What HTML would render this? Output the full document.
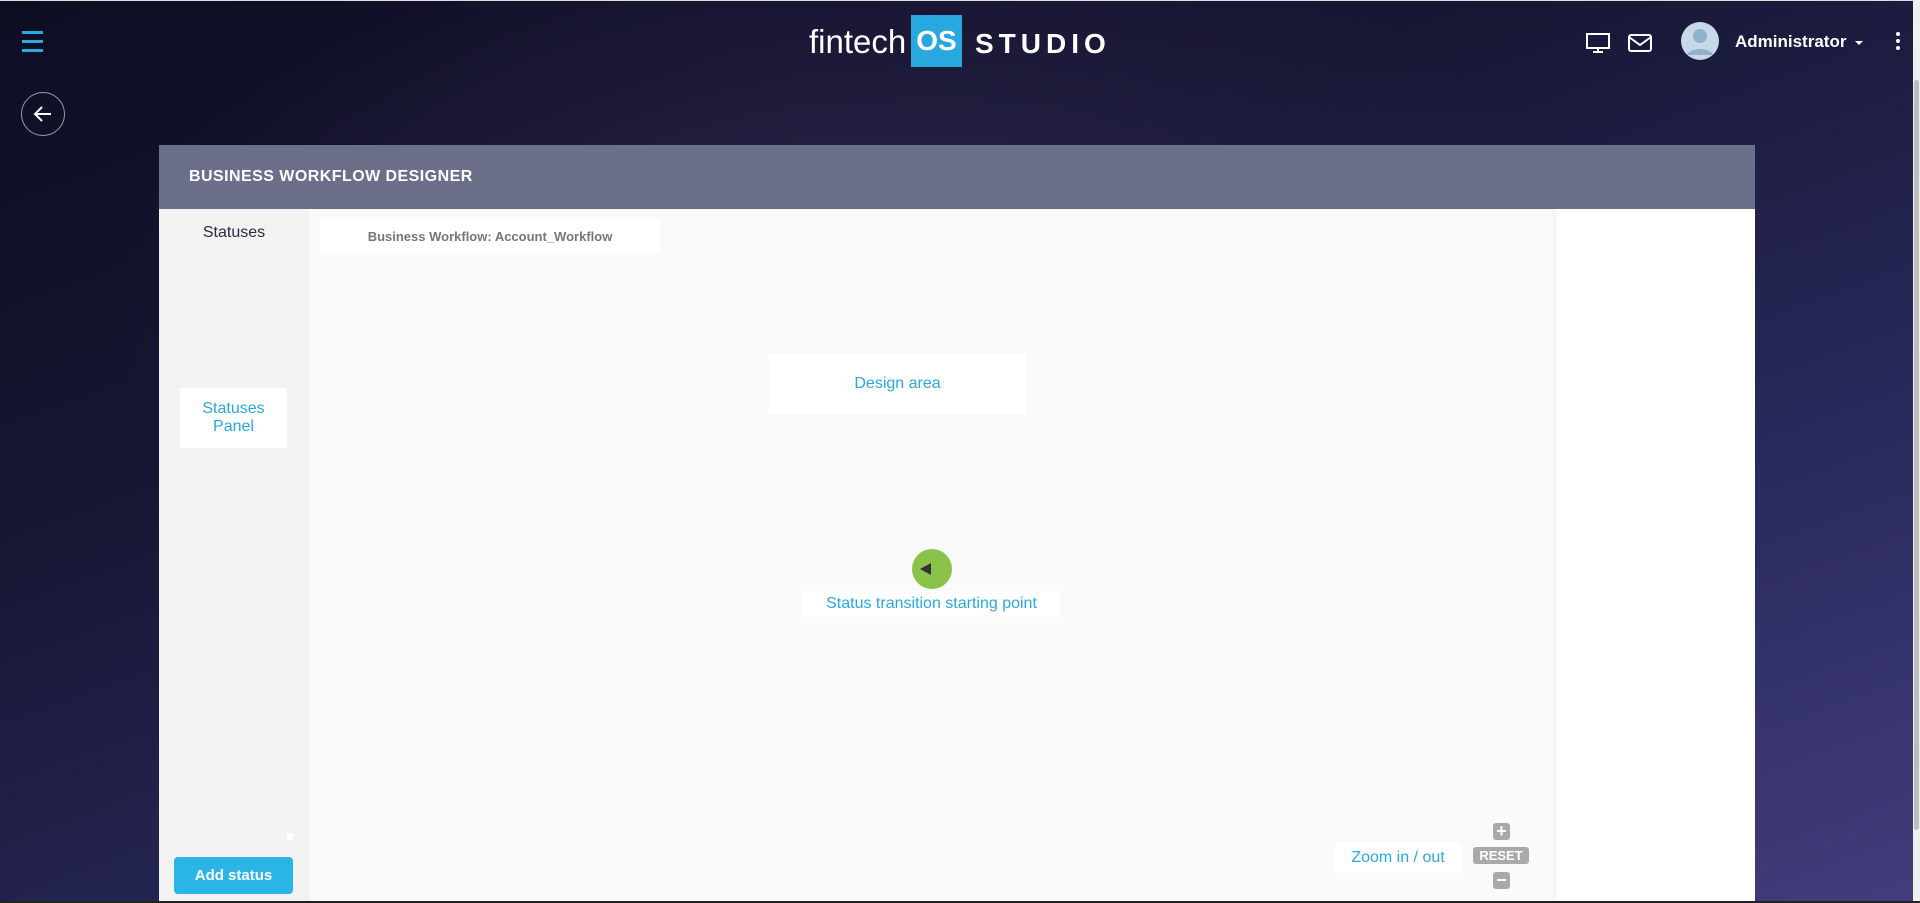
<!DOCTYPE html>
<html><head><meta charset="utf-8"><style>
*{margin:0;padding:0;box-sizing:border-box}
body{width:1920px;height:903px;overflow:hidden;font-family:"Liberation Sans",sans-serif;position:relative;
background:radial-gradient(ellipse at 45% 35%,#2a2448 0%,rgba(0,0,0,0) 50%),linear-gradient(160deg,#0d0d22 0%,#171735 35%,#2a2a5e 70%,#423d7c 100%);}
.a{position:absolute}
.ham div{position:absolute;left:22px;width:21px;height:3px;background:#2aa8e0}
.ctr{display:flex;align-items:center;justify-content:center;text-align:center}
.blue{color:#29a8e0;font-size:16px}
.zb{background:#a9a9a9;color:#fff;border-radius:3px;font-weight:bold}
</style></head><body>
<div class="a" style="left:0;top:0;width:1920px;height:1px;background:#ddd"></div>
<div class="ham"><div style="top:31px"></div><div style="top:40px"></div><div style="top:49px"></div></div>
<div class="a" style="left:21px;top:92px;width:44px;height:44px;border:1.5px solid #9a9ab0;border-radius:50%"></div>
<svg class="a" style="left:31px;top:102px" width="24" height="24" viewBox="0 0 24 24"><path d="M20 12H5M11 5l-7 7 7 7" stroke="#fff" stroke-width="2" fill="none"/></svg>
<div class="a" style="left:809px;top:23px;color:#fff;font-size:33px;font-weight:300;letter-spacing:0px">fintech</div>
<div class="a ctr" style="left:911px;top:15px;width:51px;height:52px;background:#29a8e0;color:#fff;font-size:28px;font-weight:bold">OS</div>
<div class="a" style="left:975px;top:28px;color:#fff;font-size:28px;font-weight:bold;letter-spacing:5px">STUDIO</div>
<svg class="a" style="left:1586px;top:32px" width="24" height="22" viewBox="0 0 24 22"><rect x="1" y="2" width="22" height="14" fill="none" stroke="#fff" stroke-width="2"/><path d="M12 16v4M7 20h10" stroke="#fff" stroke-width="2"/></svg>
<svg class="a" style="left:1628px;top:34px" width="24" height="18" viewBox="0 0 24 18"><rect x="1" y="1" width="22" height="16" rx="2" fill="none" stroke="#fff" stroke-width="2"/><path d="M1 3l11 8 11-8" fill="none" stroke="#fff" stroke-width="2"/></svg>
<svg class="a" style="left:1681px;top:22px" width="38" height="38" viewBox="0 0 38 38"><circle cx="19" cy="19" r="19" fill="#c7d9e8"/><circle cx="19" cy="14" r="7" fill="#8fb1cb"/><path d="M6 33c3-8 23-8 26 0" fill="#8fb1cb"/></svg>
<div class="a" style="left:1735px;top:32px;color:#fff;font-size:17px;font-weight:bold">Administrator</div>
<div class="a" style="left:1855px;top:41px;border:4px solid transparent;border-top-color:#fff;border-bottom:0"></div>
<div class="a" style="left:1896px;top:32px;width:4px;height:4px;background:#fff;border-radius:50%;box-shadow:0 7px 0 #fff,0 14px 0 #fff"></div>
<div class="a" style="left:1913px;top:0;width:7px;height:903px;background:#f0f0f0"></div>
<div class="a" style="left:1914px;top:80px;width:5px;height:750px;background:#bdbdbd;border-radius:3px"></div>
<div class="a" style="left:159px;top:145px;width:1596px;height:64px;background:#6b6f8a"></div>
<div class="a" style="left:189px;top:168px;color:#fff;font-size:16px;font-weight:bold;letter-spacing:.45px">BUSINESS WORKFLOW DESIGNER</div>
<div class="a" style="left:159px;top:209px;width:1596px;height:692px;background:#fff"></div>
<div class="a" style="left:159px;top:209px;width:150px;height:692px;background:#f2f2f2"></div>
<div class="a" style="left:159px;top:224px;width:150px;text-align:center;font-size:16px;color:#2b2b40">Statuses</div>
<div class="a ctr blue" style="left:180px;top:388px;width:107px;height:60px;background:#fff;line-height:18px">Statuses<br>Panel</div>
<div class="a" style="left:287px;top:833px;width:6px;height:7px;background:#fff"></div>
<div class="a ctr" style="left:174px;top:857px;width:119px;height:37px;background:#2bb4e6;border-radius:4px;color:#fff;font-weight:bold;font-size:15px">Add status</div>
<div class="a" style="left:309px;top:209px;width:1244px;height:692px;background:#fafafa;box-shadow:3px 0 5px rgba(0,0,0,.06)"></div>
<div class="a ctr" style="left:320px;top:219px;width:340px;height:34px;background:#fff;color:#777;font-size:13px;font-weight:bold">Business Workflow: Account_Workflow</div>
<div class="a ctr blue" style="left:769px;top:354px;width:257px;height:60px;background:#fff">Design area</div>
<div class="a" style="left:912px;top:549px;width:40px;height:40px;border-radius:50%;background:#8bc34a"></div>
<div class="a" style="left:920px;top:563px;border:6px solid transparent;border-right:11px solid #333;border-left:0"></div>
<div class="a ctr blue" style="left:803px;top:591px;width:257px;height:26px;background:#fff">Status transition starting point</div>
<div class="a ctr blue" style="left:1335px;top:842px;width:126px;height:31px;background:#fff">Zoom in / out</div>
<div class="a ctr zb" style="left:1493px;top:823px;width:17px;height:17px;font-size:18px">+</div>
<div class="a ctr zb" style="left:1473px;top:847px;width:56px;height:17px;font-size:13px">RESET</div>
<div class="a ctr zb" style="left:1493px;top:872px;width:17px;height:17px;font-size:18px">−</div>
<div class="a" style="left:0;top:901px;width:1920px;height:2px;background:#222"></div>
</body></html>
